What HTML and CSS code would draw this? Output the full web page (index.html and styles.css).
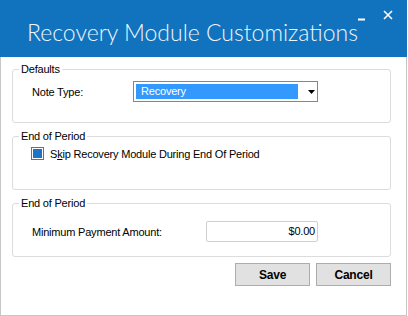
FILE: index.html
```html
<!DOCTYPE html>
<html>
<head>
    <title>Recovery Module Customizations</title>
    <link rel="stylesheet" href="styles.css">
</head>
<body>

    <div class="window">
        <div class="titlebar">
            <span class="title">Recovery Module Customizations</span>
            <div class="win-controls">
                <svg class="btn-min" width="7" height="3" viewBox="0 0 7 3"><rect x="0" y="0.5" width="7" height="2" fill="#fff"/></svg>
                <svg class="btn-close" width="10" height="10" viewBox="0 0 10 10"><path d="M1 1 L9 9 M9 1 L1 9" stroke="#fff" stroke-width="1.6"/></svg>
            </div>
        </div>

        <div class="content">
            <fieldset class="group">
                <legend>Defaults</legend>
                <div class="row">
                    <label class="field-label">Note Type:</label>
                    <div class="combo">
                        <span class="combo-value">Recovery</span>
                        <svg class="combo-arrow" width="7" height="4" viewBox="0 0 7 4"><path d="M0 0 H7 L3.5 4 Z" fill="#000"/></svg>
                    </div>
                </div>
            </fieldset>

            <fieldset class="group">
                <legend>End of Period</legend>
                <div class="check-row">
                    <span class="checkbox"><span class="check-fill"></span></span>
                    <span>S<u>k</u>ip Recovery Module During End Of Period</span>
                </div>
            </fieldset>

            <fieldset class="group">
                <legend>End of Period</legend>
                <div class="row amount-row">
                    <label class="field-label">Minimum Payment Amount:</label>
                    <div class="amount">$0.00</div>
                </div>
            </fieldset>

            <div class="buttons">
                <button class="btn">Save</button>
                <button class="btn">Cancel</button>
            </div>
        </div>
    </div>

</body>
</html>
```

FILE: styles.css
```css
body {
    margin: 0;
    background: #fff;
    font-family: "Liberation Sans", Arial, sans-serif;
    font-size: 11px;
    letter-spacing: -0.2px;
    color: #000;
}

.window {
    position: relative;
    width: 407px;
    height: 316px;
    box-sizing: border-box;
    border: 1px solid #c6c6c6;
    border-top: none;
    background: #fff;
}

.titlebar {
    height: 57px;
    margin: 0 -1px;
    background: #1173bd;
    box-sizing: border-box;
    padding: 17px 0 0 27px;
}

.title {
    font-family: "Lato", "Open Sans", sans-serif;
    font-weight: 300;
    font-size: 23px;
    letter-spacing: 0;
    color: #eef5fb;
    line-height: 30px;
}

.win-controls {
    position: absolute;
    top: 10px;
    right: 13px;
    display: flex;
    align-items: flex-start;
    gap: 18px;
}

.btn-min {
    margin-top: 8px;
}

.content {
    padding: 5px 15px 0 11px;
}

.group {
    margin: 0 0 6px 0;
    padding: 0;
    height: 61px;
    box-sizing: border-box;
    border: 1px solid #dcdcdc;
    border-radius: 3px;
}

.group legend {
    padding: 0 2px;
    margin-left: 6px;
    line-height: 14px;
}

.row {
    display: flex;
    align-items: center;
    margin-top: 5px;
    padding-left: 19px;
}

.field-label {
    width: 101px;
}

.combo {
    width: 185px;
    height: 21px;
    box-sizing: border-box;
    border: 1px solid #3399ff;
    padding: 2px;
    display: flex;
    align-items: center;
    gap: 10px;
}

.combo-value {
    width: 162px;
    height: 15px;
    background: #3399ff;
    color: #fff;
    line-height: 15px;
    padding-left: 5px;
    box-sizing: border-box;
}

.check-row {
    display: flex;
    align-items: center;
    gap: 6px;
    margin-top: 4px;
    padding-left: 18px;
}

.checkbox {
    width: 13px;
    height: 13px;
    box-sizing: border-box;
    border: 1px solid #6f6f6f;
    padding: 1px;
    background: #fff;
}

.check-fill {
    display: block;
    width: 9px;
    height: 9px;
    background: #1b74c5;
}

.check-row u {
    text-decoration-thickness: 1px;
}

.amount-row {
    margin-top: 11px;
}

.amount-row .field-label {
    width: 174px;
}

.amount {
    width: 112px;
    height: 21px;
    box-sizing: border-box;
    border: 1px solid #cfcfcf;
    border-radius: 2px;
    text-align: right;
    padding-right: 2px;
    line-height: 19px;
}

.buttons {
    display: flex;
    justify-content: flex-end;
    gap: 6px;
    margin-top: 2px;
}

.btn {
    width: 75px;
    height: 23px;
    background: #e1e1e1;
    border: 1px solid #adadad;
    font-family: "Liberation Sans", Arial, sans-serif;
    font-weight: bold;
    font-size: 12px;
    letter-spacing: -0.2px;
    padding: 0;
}
```
